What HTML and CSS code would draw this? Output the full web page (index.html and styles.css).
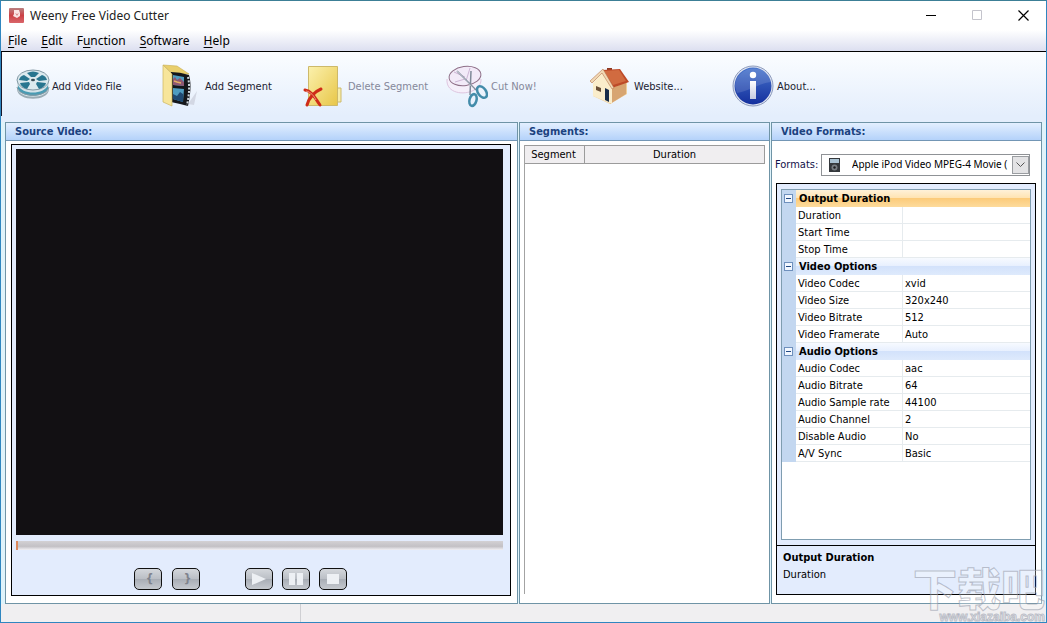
FILE: index.html
```html
<!DOCTYPE html>
<html lang="en">
<head>
<meta charset="utf-8">
<title>Weeny Free Video Cutter</title>
<link rel="stylesheet" href="styles.css">
</head>
<body>
<div class="window">
  <header class="titlebar">
    <svg class="app-icon" viewBox="0 0 15 15"><defs><linearGradient id="red" x2="0" y2="1"><stop offset="0" stop-color="#b98080"/><stop offset=".5" stop-color="#cc4045"/><stop offset="1" stop-color="#d9666a"/></linearGradient></defs><rect width="15" height="15" rx="1" fill="url(#red)"/><path d="M5 2l5 0 1 3 0 3-3 2-4-2 1-2z" fill="#fbe3e3"/><path d="M6 5l2 1 2-1-2 3z" fill="#d98a8c"/></svg>
    <h1 class="title">Weeny Free Video Cutter</h1>
    <div class="window-buttons">
      <button type="button" aria-label="Minimize"><svg viewBox="0 0 11 11"><path d="M0 5.5h10" stroke="#000"/></svg></button>
      <button type="button" aria-label="Maximize" disabled><svg viewBox="0 0 11 11"><path d="M.5.5h9v9h-9z" fill="none" stroke="#c4c4cc"/></svg></button>
      <button type="button" aria-label="Close"><svg viewBox="0 0 11 11"><path d="M.5.5l10 10M10.500 .5l-10 10" stroke="#000" stroke-width="1.200"/></svg></button>
    </div>
  </header>
  <nav class="menubar">
    <button type="button"><u>F</u>ile</button>
    <button type="button"><u>E</u>dit</button>
    <button type="button">F<u>u</u>nction</button>
    <button type="button"><u>S</u>oftware</button>
    <button type="button"><u>H</u>elp</button>
  </nav>
  <div class="toolbar">
    <button type="button" class="tool">
      <svg width="34" height="34" viewBox="0 0 34 34"><path d="M1 12v8c0 13 32 13 32 0v-8z" fill="#9aabb4"/><path d="M1 11v7c0 13 32 13 32 0v-7z" fill="#d5e3e9"/><path d="M2 16c4 10 26 10 30 0v4c-4 9-26 9-30 0z" fill="#4a9bb3"/><path d="M1 18c2 11 30 11 32 0" fill="none" stroke="#8798a2"/><ellipse cx="17" cy="11" rx="16" ry="10" fill="#dbe9ee" stroke="#8298a4"/><g fill="#28758f"><path d="M11 4q6-3 12 0l-4 4h-4z"/><path d="M8 6l6 4-3 2-8-1q1-4 5-5z"/><path d="M26 6l-6 4 3 2 8-1q-1-4-5-5z"/><path d="M4 14l9-1 1 2-3 5q-6-2-7-6z"/><path d="M30 14l-9-1-1 2 3 5q6-2 7-6z"/></g><ellipse cx="17" cy="11" rx="2" ry="1.300" fill="#394b55"/></svg>
      <span>Add Video File</span>
    </button>
    <button type="button" class="tool">
      <svg width="42" height="44" viewBox="0 0 42 44"><path d="M28 40l9-13-3 14z" fill="#d3d8e4"/><path d="M3 1l14 1 12 8H13z" fill="#e9cf6c" stroke="#c7ad51" stroke-width=".6"/><path d="M11 8q9 0 18 3c3 10 1 21-1 31l-8-2-9-2z" fill="#15171b"/><path d="M13 11l11 2v9l-11-1zM13 24l11 1-1 13-10-3z" fill="#4f9cc0"/><path d="M13 15l2-2 2 3 3-2 4 4v4l-11-1z" fill="#8e5772"/><path d="M13 30l4 2 3-4 3 2v8l-10-3z" fill="#204a73"/><path d="M14 17l3 1 4 1" stroke="#e4af63" stroke-width="1.500" fill="none"/><path d="M28 13c2 9 1 19-1 28" stroke="#cfd8de" stroke-width="2" stroke-dasharray="2 1.500" fill="none"/><path d="M3 1l9 9v32l-9-4z" fill="#f7e59a" stroke="#cbb45f" stroke-width=".7"/></svg>
      <span>Add Segment</span>
    </button>
    <button type="button" class="tool" disabled>
      <svg width="42" height="44" viewBox="0 0 42 44"><defs><linearGradient id="folder" x2="1" y2="1"><stop offset="0" stop-color="#fbf1ad"/><stop offset="1" stop-color="#e8c648"/></linearGradient></defs><path d="M34 24h4v14h-4z" fill="#f7eda9" stroke="#cdb96a"/><path d="M5.500 2.500h29v39h-29z" fill="url(#folder)" stroke="#cdb96a"/><path d="M2 26c7 1 10 8 15 15M18 25C11 28 6 34 4 41" stroke="#cf2c18" stroke-width="3" fill="none" stroke-linecap="round"/><path d="M3 27c5 1 8 5 10 9" stroke="#f09580" fill="none"/></svg>
      <span>Delete Segment</span>
    </button>
    <button type="button" class="tool" disabled>
      <svg width="42" height="44" viewBox="0 0 42 44"><path d="M1 15c-2 20 35 17 34 0" fill="#f5effa" stroke="#dec5df"/><ellipse cx="19" cy="12" rx="16" ry="9.500" transform="rotate(-8 19 12)" fill="#f2eaf8" stroke="#8f7088"/><path d="M8 8l11 5M24 4l-4 13M9 18l10-3" stroke="#cdb5d5" fill="none"/><path d="M11 7l19 19M25 7l-1 24" stroke="#7f8998" stroke-width="1.500"/><path d="M11 7l17 18" stroke="#e4e8ed" stroke-width=".6"/><ellipse cx="36" cy="28" rx="4" ry="6.500" transform="rotate(-35 36 28)" fill="none" stroke="#438caa" stroke-width="2.500"/><ellipse cx="27" cy="36" rx="3.500" ry="6" transform="rotate(15 27 36)" fill="none" stroke="#438caa" stroke-width="2.500"/></svg>
      <span>Cut Now!</span>
    </button>
    <button type="button" class="tool">
      <svg width="42" height="44" viewBox="0 0 42 44"><path d="M18 4h5v8h-5z" fill="#8f3a23"/><path d="M4 20v12l17 8 17-10V16L14 9z" fill="#efcf9c"/><path d="M21 25v15l16-10V18z" fill="#d7a571"/><path d="M4 19l10-11 9 15v17L4 32z" fill="#faedcb"/><path d="M13 6l18-1 9 13-17 6z" fill="#bd4a28"/><path d="M15 7l15-1 7 11-13 4z" fill="#d16b40"/><path d="M1 17L14 5l11 19-2 1L13 9 3 19z" fill="#f0d8b4" stroke="#b8774e" stroke-width=".6"/><path d="M7 22l5 2v4l-5-2z" fill="#6a5039"/><path d="M16 24l4 2v12l-4-2z" fill="#182c48"/></svg>
      <span>Website...</span>
    </button>
    <button type="button" class="tool">
      <svg width="42" height="44" viewBox="0 0 42 44"><defs><linearGradient id="info" x2="0" y2="1"><stop offset="0" stop-color="#4774cc"/><stop offset="1" stop-color="#142f9d"/></linearGradient><linearGradient id="stem" x2="0" y2="1"><stop offset="0" stop-color="#fff"/><stop offset="1" stop-color="#c5cbe0"/></linearGradient></defs><circle cx="21" cy="22" r="20" fill="#dfe4f0" stroke="#8d9bbd"/><circle cx="21" cy="22" r="18.500" fill="url(#info)"/><path d="M3 22C4 0 37-1 39 18 28 19 17 27 5 29z" fill="#fff" opacity=".13"/><circle cx="21" cy="11" r="3.200" fill="#fff"/><path d="M18 17h6v18h-6z" fill="url(#stem)"/></svg>
      <span>About...</span>
    </button>
  </div>
  <main class="panels">
    <section class="panel">
      <h2 class="panel-title">Source Video:</h2>
      <div class="player">
        <div class="screen"></div>
        <input class="seek" type="range" min="0" max="100" value="0" aria-label="Position">
        <div class="controls">
          <button type="button" class="mark">{</button>
          <button type="button" class="mark">}</button>
          <button type="button" class="play" aria-label="Play"><svg viewBox="0 0 18 14"><path d="M2 1l14 6-14 6z"/></svg></button>
          <button type="button" aria-label="Pause"><svg viewBox="0 0 18 14"><path d="M2 1h6v12H2zM10 1h6v12h-6z"/></svg></button>
          <button type="button" aria-label="Stop"><svg viewBox="0 0 18 14"><path d="M3 2h12v10H3z"/></svg></button>
        </div>
      </div>
    </section>
    <section class="panel">
      <h2 class="panel-title">Segments:</h2>
      <div class="segments">
        <table class="segment-table">
          <thead><tr><th class="segment-col">Segment</th><th>Duration</th></tr></thead>
        </table>
      </div>
    </section>
    <section class="panel">
      <h2 class="panel-title">Video Formats:</h2>
      <div class="format-row">
        <label for="format">Formats:</label>
        <div class="format-box">
          <select id="format"><option>Apple iPod Video MPEG-4 Movie (</option></select>
          <svg class="ipod" viewBox="0 0 11 14"><rect width="11" height="14" fill="#34383c"/><path d="M1 1h9v4H1z" fill="#a9c2d2"/><circle cx="5.500" cy="9.500" r="3" fill="#777d82"/><circle cx="5.500" cy="9.500" r="1.200" fill="#1c1e20"/></svg>
          <span class="drop"><svg viewBox="0 0 9 6"><path d="M.5.5l4 4 4-4" fill="none" stroke="#555"/></svg></span>
        </div>
      </div>
      <div class="inspector">
        <div class="grid-area">
          <div class="grid-box">
            <table class="props">
              <colgroup><col class="col-gutter"><col class="col-name"><col></colgroup>
              <tbody>
                <tr class="group selected"><td class="gutter"><button type="button" class="fold" aria-label="Collapse Output Duration"></button></td><th colspan="2">Output Duration</th></tr>
                <tr><td class="gutter"></td><th>Duration</th><td></td></tr>
                <tr><td class="gutter"></td><th>Start Time</th><td></td></tr>
                <tr><td class="gutter"></td><th>Stop Time</th><td></td></tr>
                <tr class="group"><td class="gutter"><button type="button" class="fold" aria-label="Collapse Video Options"></button></td><th colspan="2">Video Options</th></tr>
                <tr><td class="gutter"></td><th>Video Codec</th><td>xvid</td></tr>
                <tr><td class="gutter"></td><th>Video Size</th><td>320x240</td></tr>
                <tr><td class="gutter"></td><th>Video Bitrate</th><td>512</td></tr>
                <tr><td class="gutter"></td><th>Video Framerate</th><td>Auto</td></tr>
                <tr class="group"><td class="gutter"><button type="button" class="fold" aria-label="Collapse Audio Options"></button></td><th colspan="2">Audio Options</th></tr>
                <tr><td class="gutter"></td><th>Audio Codec</th><td>aac</td></tr>
                <tr><td class="gutter"></td><th>Audio Bitrate</th><td>64</td></tr>
                <tr><td class="gutter"></td><th>Audio Sample rate</th><td>44100</td></tr>
                <tr><td class="gutter"></td><th>Audio Channel</th><td>2</td></tr>
                <tr><td class="gutter"></td><th>Disable Audio</th><td>No</td></tr>
                <tr><td class="gutter"></td><th>A/V Sync</th><td>Basic</td></tr>
              </tbody>
            </table>
          </div>
        </div>
        <div class="help"><strong>Output Duration</strong><span>Duration</span></div>
      </div>
    </section>
  </main>
  <footer class="statusbar"><div class="status-cell"></div></footer>
  <div class="watermark"><span class="mark-name">下载吧</span><span class="mark-url">www.xiazaiba.com</span></div>
</div>
</body>
</html>
```
FILE: styles.css
```css
* { box-sizing: border-box; }

body {
  margin: 0;
  font: 11px/17px "DejaVu Sans Condensed", "DejaVu Sans", "Noto Sans CJK SC", sans-serif;
  color: #000;
}

button { padding: 0; border: 0; background: none; font: inherit; color: inherit; }
h1, h2 { margin: 0; }
svg { display: block; }
table { border-collapse: separate; border-spacing: 0; width: 100%; }

.window {
  position: relative;
  display: flex;
  flex-direction: column;
  height: 100vh;
  overflow: hidden;
  border: 1px solid #2f86c0;
  border-top-color: #3c7f96;
  background: #e4eefc;
}

.titlebar { display: flex; align-items: center; height: 29px; padding-left: 8px; background: #fff; }
.app-icon { width: 15px; height: 15px; margin-right: 6px; }
.title { flex: 1; font: 12px/20px "Noto Sans", sans-serif; color: #222; }
.window-buttons { display: flex; }
.window-buttons button { display: grid; place-items: center; width: 46px; height: 29px; }
.window-buttons svg { width: 11px; height: 11px; }

.menubar {
  display: flex;
  gap: 14px;
  height: 22px;
  padding: 0 7px;
  background: linear-gradient(#fff, #dcdff0);
  border-bottom: 1px solid #000;
  font: 12px/20px "Noto Sans", sans-serif;
}
.menubar u { text-underline-offset: 2px; }

.toolbar {
  display: flex;
  height: 64px;
  margin-bottom: 6px;
  padding: 4px 0 0 14px;
  border-left: 1px solid #16182c;
  background: linear-gradient(#fbfdff, #e4eefc);
}
.tool { display: flex; align-items: center; gap: 2px; width: 144px; text-align: left; }
.tool + .tool { gap: 3px; width: 143px; }
.tool span { white-space: nowrap; color: #1c1c30; }
.tool:disabled span { color: #85889a; }

.panels {
  flex: 1;
  min-height: 0;
  display: grid;
  grid-template-columns: 513fr 251fr 271fr;
  gap: 1px;
  padding: 0 4px;
  background: #dff3fb;
}
.panel {
  display: flex;
  flex-direction: column;
  min-width: 0;
  min-height: 0;
  border: 1px solid #6f94a6;
  background: #fff;
}
.panel-title {
  height: 18px;
  padding-left: 9px;
  border-bottom: 1px solid #7396b5;
  background: linear-gradient(#e3efff, #b4d2fa);
  font-size: 11px;
  line-height: 18px;
  color: #1b427f;
}

.player {
  flex: 1;
  display: flex;
  flex-direction: column;
  margin: 3px 6px 7px 5px;
  padding: 4px 7px 5px 4px;
  border: 1px solid #000;
  background: #e3ecfd;
}
.screen { flex: 1; background: #121013; }
.seek {
  appearance: none;
  width: 100%;
  height: 9px;
  margin: 6px 0 18px;
  background: linear-gradient(#d3d1d4, #c3c1c5 60%, #f1f0f4);
}
.seek::-webkit-slider-thumb { appearance: none; width: 2px; height: 9px; background: #dc8a5e; }
.controls { display: flex; gap: 9px; padding-left: 118px; }
.controls button {
  display: grid;
  place-items: center;
  width: 28px;
  height: 22px;
  border: 1px solid #111;
  border-radius: 5px;
  background: linear-gradient(#d4d7dc, #babec5 50%, #a9aeb6 52%, #c5c9cf);
}
.controls svg { width: 18px; height: 14px; fill: #edf0f4; }
.controls .mark { margin-right: 1px; padding-left: 3px; font-size: 12px; font-weight: bold; color: #7f838d; }
.controls .play { margin-left: 35px; }

.segments {
  flex: 1;
  margin: 4px 4px 9px 4px;
  border-left: 1px solid #a3a3a3;
}
.segment-table th {
  height: 19px;
  padding: 1px 0 0;
  border-top: 1px solid #9b9b9b;
  border-bottom: 1px solid #9b9b9b;
  border-right: 1px solid #9b9b9b;
  background: #f0eef0;
  font-weight: normal;
  line-height: 16px;
}
.segment-table .segment-col { width: 60px; padding-right: 2px; }

.format-row { display: flex; align-items: center; height: 23px; margin: 12px 11px 0 3px; }
.format-row label { width: 46px; white-space: nowrap; color: #11114a; }
.format-box { position: relative; flex: 1; min-width: 0; }
.format-box select {
  appearance: none;
  width: 100%;
  height: 22px;
  padding: 0 18px 0 30px;
  border: 1px solid #8f9296;
  border-radius: 0;
  background: #fff;
  font: 10px/17px "Noto Sans", sans-serif;
  color: #000;
}
.ipod { position: absolute; left: 8px; top: 4px; width: 11px; height: 14px; pointer-events: none; }
.drop {
  position: absolute;
  right: 1px;
  top: 2px;
  display: grid;
  place-items: center;
  width: 17px;
  height: 18px;
  border: 1px solid #9a9da1;
  background: #e3e3e5;
  pointer-events: none;
}
.drop svg { width: 9px; height: 6px; }

.inspector {
  flex: 1;
  display: flex;
  flex-direction: column;
  min-height: 0;
  margin: 7px 5px 8px 4px;
  border: 1px solid #000;
  background: #e3ecfd;
}
.grid-area { flex: 1; display: flex; min-height: 0; padding: 5px 4px 5px 4px; }
.grid-box { flex: 1; min-width: 0; border: 1px solid #7f9db0; background: #fff; }
.props { table-layout: fixed; }
.col-gutter { width: 14px; }
.col-name { width: 106px; }
.props td, .props th {
  height: 17px;
  padding: 1px 0 0 2px;
  border-bottom: 1px solid #e6ebee;
  font-weight: normal;
  line-height: 15px;
  text-align: left;
  white-space: nowrap;
}
.props td { border-left: 1px solid #e6ebee; }
.props .gutter { padding: 0 0 0 2px; border: 0; background: #c3d7f0; }
.props .group th {
  padding: 0 0 0 3px;
  border-bottom: 0;
  background: linear-gradient(#f7faff, #e8f0fe 45%, #d3e2fb 50%, #deeafc);
  font-weight: bold;
  line-height: 17px;
}
.props .selected th { background: linear-gradient(#fff1d8, #ffe4b3 45%, #fccb7a 50%, #fddb9c); }
.fold {
  display: block;
  width: 9px;
  height: 9px;
  border: 1px solid #6f90bd;
  background: linear-gradient(#234a84, #234a84) center / 5px 1px no-repeat #f2f7ff;
}

.help { display: flex; flex-direction: column; height: 49px; padding: 3px 6px; border-top: 1px solid #000; }

.statusbar { height: 18px; background: #f0eff1; }
.status-cell { width: 300px; height: 18px; border-right: 1px solid #cfcfd3; }

.watermark {
  position: absolute;
  right: 1px;
  bottom: 0;
  display: flex;
  flex-direction: column;
  align-items: flex-end;
  color: rgba(255, 255, 255, .3);
  -webkit-text-stroke: 1px rgba(150, 155, 170, .6);
  pointer-events: none;
}
.mark-name { font: 900 44px/50px "Noto Sans CJK SC", sans-serif; }
.mark-url { font: bold 12px/10px "Liberation Sans", sans-serif; }
```
